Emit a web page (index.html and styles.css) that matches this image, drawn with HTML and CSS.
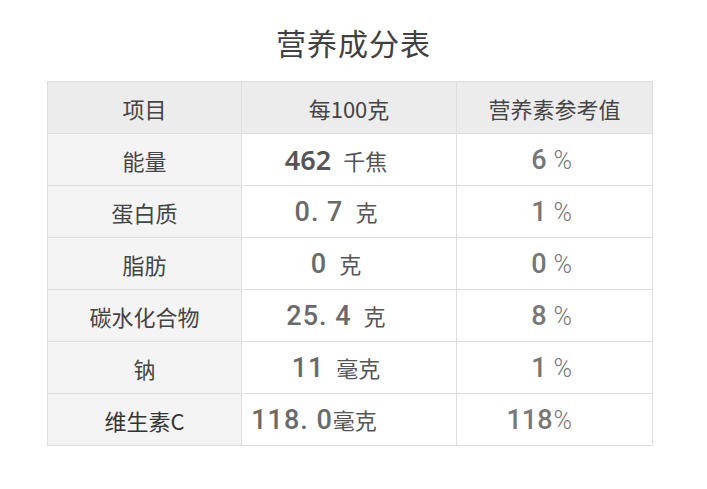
FILE: index.html
```html
<!DOCTYPE html>
<html lang="zh">
<head>
<meta charset="utf-8">
<title>营养成分表</title>
<link rel="stylesheet" href="styles.css">
</head>
<body>
<h1 class="title">营养成分表</h1>
<table class="nutri">
  <thead>
    <tr>
      <th class="c1">项目</th>
      <th class="c2">每100克</th>
      <th class="c3">营养素参考值</th>
    </tr>
  </thead>
  <tbody>
    <tr>
      <td class="c1">能量</td>
      <td class="c2"><span class="num num-a">462</span><span class="unit">千焦</span></td>
      <td class="c3"><span class="pct">6</span><span class="sym">%</span></td>
    </tr>
    <tr>
      <td class="c1">蛋白质</td>
      <td class="c2"><span class="num">0. 7</span><span class="unit">克</span></td>
      <td class="c3"><span class="pct">1</span><span class="sym">%</span></td>
    </tr>
    <tr>
      <td class="c1">脂肪</td>
      <td class="c2"><span class="num">0</span><span class="unit">克</span></td>
      <td class="c3"><span class="pct">0</span><span class="sym">%</span></td>
    </tr>
    <tr>
      <td class="c1">碳水化合物</td>
      <td class="c2"><span class="num">25. 4</span><span class="unit">克</span></td>
      <td class="c3"><span class="pct">8</span><span class="sym">%</span></td>
    </tr>
    <tr>
      <td class="c1">钠</td>
      <td class="c2"><span class="num">11</span><span class="unit">毫克</span></td>
      <td class="c3"><span class="pct">1</span><span class="sym">%</span></td>
    </tr>
    <tr>
      <td class="c1 strong">维生素C</td>
      <td class="c2 last"><span class="num">118. 0</span><span class="unit tight">毫克</span></td>
      <td class="c3"><span class="pct">118</span><span class="sym tight">%</span></td>
    </tr>
  </tbody>
</table>
</body>
</html>
```

FILE: styles.css
```css
html, body {
  margin: 0;
  padding: 0;
  background: #ffffff;
}

body {
  font-family: "Noto Sans CJK SC", "Noto Sans", sans-serif;
  color: #444;
}

.title {
  margin: 0;
  padding-top: 22px;
  height: 40px;
  line-height: 40px;
  font-size: 30px;
  font-weight: 400;
  text-align: center;
  color: #404040;
  letter-spacing: 1px;
}

.nutri {
  margin: 19px 0 0 47px;
  border-collapse: collapse;
  table-layout: fixed;
  width: 605px;
}

.nutri th,
.nutri td {
  border: 1px solid #dedede;
  height: 51px;
  padding: 0;
  vertical-align: middle;
  white-space: nowrap;
}

.nutri th {
  background: #ececec;
  font-size: 22px;
  font-weight: 400;
  color: #444;
  text-align: center;
}

.nutri th.c1 { width: 193px; }
.nutri th.c2 { width: 214px; }
.nutri th.c3 { width: 195px; }

.nutri td.c1 {
  background: #f4f4f4;
  font-size: 22px;
  text-align: center;
  color: #444;
}

.nutri td.c1.strong {
  color: #333;
}

.nutri td.c2 {
  text-align: center;
  padding-right: 26px;
  color: #555;
}

.nutri td.c2.last {
  padding-right: 70px;
}

.nutri td.c3 {
  text-align: right;
  padding-right: 80px;
}

.num {
  font-family: Roboto, "Noto Sans", sans-serif;
  font-size: 27px;
  font-weight: 500;
  color: #6a6a6a;
  letter-spacing: 1px;
}

.num-a {
  font-family: "Noto Sans", "Open Sans", sans-serif;
  font-weight: 600;
  color: #555;
  letter-spacing: 0;
}

.unit {
  font-size: 22px;
  color: #555;
  margin-left: 12px;
}

.unit.tight {
  margin-left: 0;
}

.pct {
  font-family: Roboto, "Noto Sans", sans-serif;
  font-size: 27px;
  font-weight: 500;
  color: #777;
}

.sym {
  font-family: Roboto, "Noto Sans", sans-serif;
  font-size: 25px;
  font-weight: 300;
  color: #777;
  margin-left: 7px;
}

.sym.tight {
  margin-left: 1px;
}
```
